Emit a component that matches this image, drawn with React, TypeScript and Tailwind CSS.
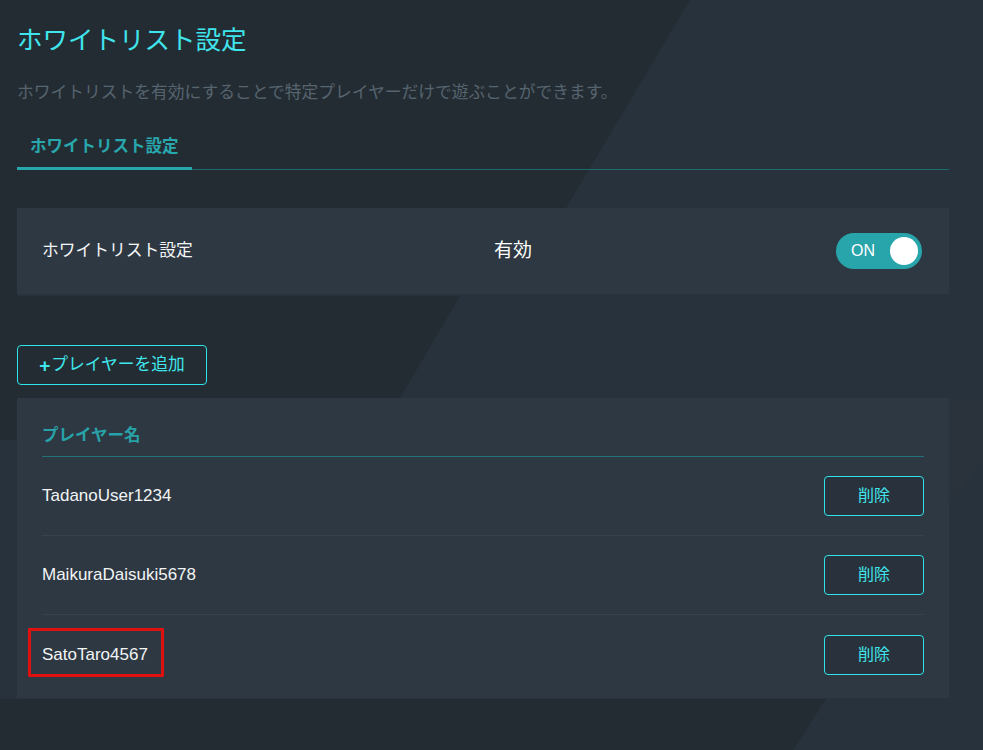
import React from 'react';

const players = ['TadanoUser1234', 'MaikuraDaisuki5678', 'SatoTaro4567'];

function Backdrop() {
  return (
    <svg
      className="absolute inset-0 w-full h-full"
      viewBox="0 0 983 750"
      preserveAspectRatio="none"
      aria-hidden="true"
    >
      <rect width="983" height="750" fill="#28323c" />
      <polygon points="0,0 690,0 565,210 0,210" fill="#242c33" />
      <polygon points="0,210 17,210 17,296 0,296" fill="#242c33" />
      <polygon points="0,296 460,296 400,398 0,398" fill="#242c33" />
      <polygon points="0,398 17,398 17,440 0,440" fill="#242c33" />
      <polygon points="0,699 826,699 793,750 0,750" fill="#242c33" />
      <polygon points="949,398 983,398 983,462 949,505" fill="#2a333c" />
    </svg>
  );
}

export default function App() {
  return (
    <div
      className="relative w-full min-h-[750px] overflow-hidden"
      style={{ fontFamily: '"Liberation Sans", "Noto Sans CJK JP", sans-serif' }}
    >
      <Backdrop />

      <div className="relative pl-[17px] pr-[34px] pt-[28px] pb-[52px]">
        {/* Title */}
        <h1 className="text-[25.5px] leading-[25px] text-[#3fe5ec]">ホワイトリスト設定</h1>
        <p className="mt-[31px] text-[16.75px] leading-[17px] text-[#56646f]">
          ホワイトリストを有効にすることで特定プレイヤーだけで遊ぶことができます。
        </p>

        {/* Tabs */}
        <div className="mt-[37px] flex border-b border-[#1e6a70]">
          <div className="px-[13px] pb-[12px] -mb-px border-b-[3px] border-[#27a7ad] text-[16.5px] leading-[17px] font-bold text-[#28a7ad]">
            ホワイトリスト設定
          </div>
        </div>

        {/* Whitelist toggle */}
        <div className="mt-[38px] h-[86px] bg-[#2e3842] flex items-center pl-[25px] pr-[27px]">
          <span className="w-[452px] text-[16.75px] text-[#f4f6f7]">ホワイトリスト設定</span>
          <span className="text-[19px] text-white">有効</span>
          <button className="ml-auto w-[86px] h-[36px] rounded-full bg-[#27a5ab] flex items-center pl-[15px] pr-[4px]">
            <span className="text-[16px] text-white">ON</span>
            <span className="ml-auto w-[28px] h-[28px] rounded-full bg-white" />
          </button>
        </div>

        {/* Add player */}
        <button className="mt-[51px] w-[190px] h-[40px] rounded-[4px] border border-[#2fe3ea] flex items-center justify-center gap-[1px] text-[16.75px] text-[#3fe6ec]">
          <span className="font-bold text-[19px] leading-none">+</span>
          <span>プレイヤーを追加</span>
        </button>

        {/* Player list */}
        <div className="mt-[13px] h-[300px] bg-[#2e3842] px-[25px] pt-[29px]">
          <div className="pb-[12px] border-b border-[#1f7479] text-[16.5px] leading-[17px] font-bold text-[#27a2a8]">
            プレイヤー名
          </div>
          {players.map((name, i) => (
            <div
              key={name}
              className={`relative flex items-center justify-between h-[79px] ${
                i < players.length - 1 ? 'border-b border-[#37424d]' : ''
              }`}
            >
              <span className="text-[17px] text-[#f2f4f5]">{name}</span>
              <button className="w-[100px] h-[40px] rounded-[4px] border border-[#2fe3ea] bg-[#29323c] text-[16px] text-[#3fe6ec]">
                削除
              </button>
              {name === 'SatoTaro4567' && (
                <span className="absolute left-[-14px] top-[13px] w-[136px] h-[49px] border-[3px] border-[#e01010] rounded-[1px]" />
              )}
            </div>
          ))}
        </div>
      </div>
    </div>
  );
}
